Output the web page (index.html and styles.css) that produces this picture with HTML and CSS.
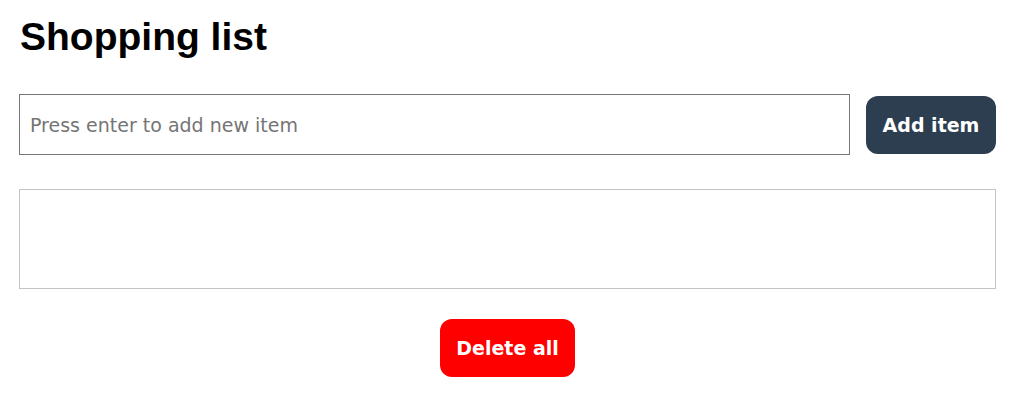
FILE: index.html
```html
<!DOCTYPE html>
<html lang="en">
<head>
  <meta charset="UTF-8" />
  <meta name="viewport" content="width=device-width, initial-scale=1.0" />
  <title>Shopping list</title>
  <link rel="stylesheet" href="styles.css">
</head>
<body>
  <div class="container">
    <h1>Shopping list</h1>

    <form id="item-form" class="add-row">
      <input type="text" id="item" placeholder="Press enter to add new item" />
      <button type="submit" class="btn btn-add">Add item</button>
    </form>

    <ul class="item-list" id="item-list"></ul>

    <div class="actions">
      <button type="button" class="btn btn-delete" id="delete-all">Delete all</button>
    </div>
  </div>

  <script>
    const form = document.getElementById('item-form');
    const input = document.getElementById('item');
    const listEl = document.getElementById('item-list');

    form.addEventListener('submit', function(e) {
      e.preventDefault();
      const text = input.value.trim();
      if (!text) return;
      const li = document.createElement('li');
      li.innerText = text;
      listEl.appendChild(li);
      form.reset();
    });

    document.getElementById('delete-all').addEventListener('click', function() {
      listEl.innerHTML = '';
    });
  </script>
</body>
</html>
```

FILE: styles.css
```css
body {
  margin: 0;
  background: white;
  font-family: "DejaVu Sans", Verdana, sans-serif;
}
.container {
  padding: 0 31px 0 19px;
}
h1 {
  font-family: "Liberation Sans", Arial, sans-serif;
  font-size: 39px;
  font-weight: bold;
  margin: 15px 0 0 1px;
  color: black;
}
.add-row {
  display: flex;
  align-items: center;
  gap: 16px;
  margin-top: 35px;
}
.add-row input {
  flex: 1;
  height: 61px;
  box-sizing: border-box;
  padding: 0 10px;
  border: 1px solid #767676;
  font-family: "DejaVu Sans", Verdana, sans-serif;
  font-size: 19px;
  outline: none;
}
.add-row input::placeholder {
  color: #757575;
}
.btn {
  height: 58px;
  padding: 0 16px;
  border: none;
  border-radius: 12px;
  color: white;
  font-family: "DejaVu Sans", Verdana, sans-serif;
  font-size: 19px;
  font-weight: bold;
  cursor: pointer;
}
.btn-add {
  width: 130px;
  background: #2c3e50;
}
.item-list {
  list-style: none;
  margin: 34px 0 0;
  padding: 0;
  height: 100px;
  box-sizing: border-box;
  border: 1px solid #c4c4c4;
}
.actions {
  display: flex;
  justify-content: center;
  margin-top: 30px;
}
.btn-delete {
  width: 135px;
  background: red;
}
```
